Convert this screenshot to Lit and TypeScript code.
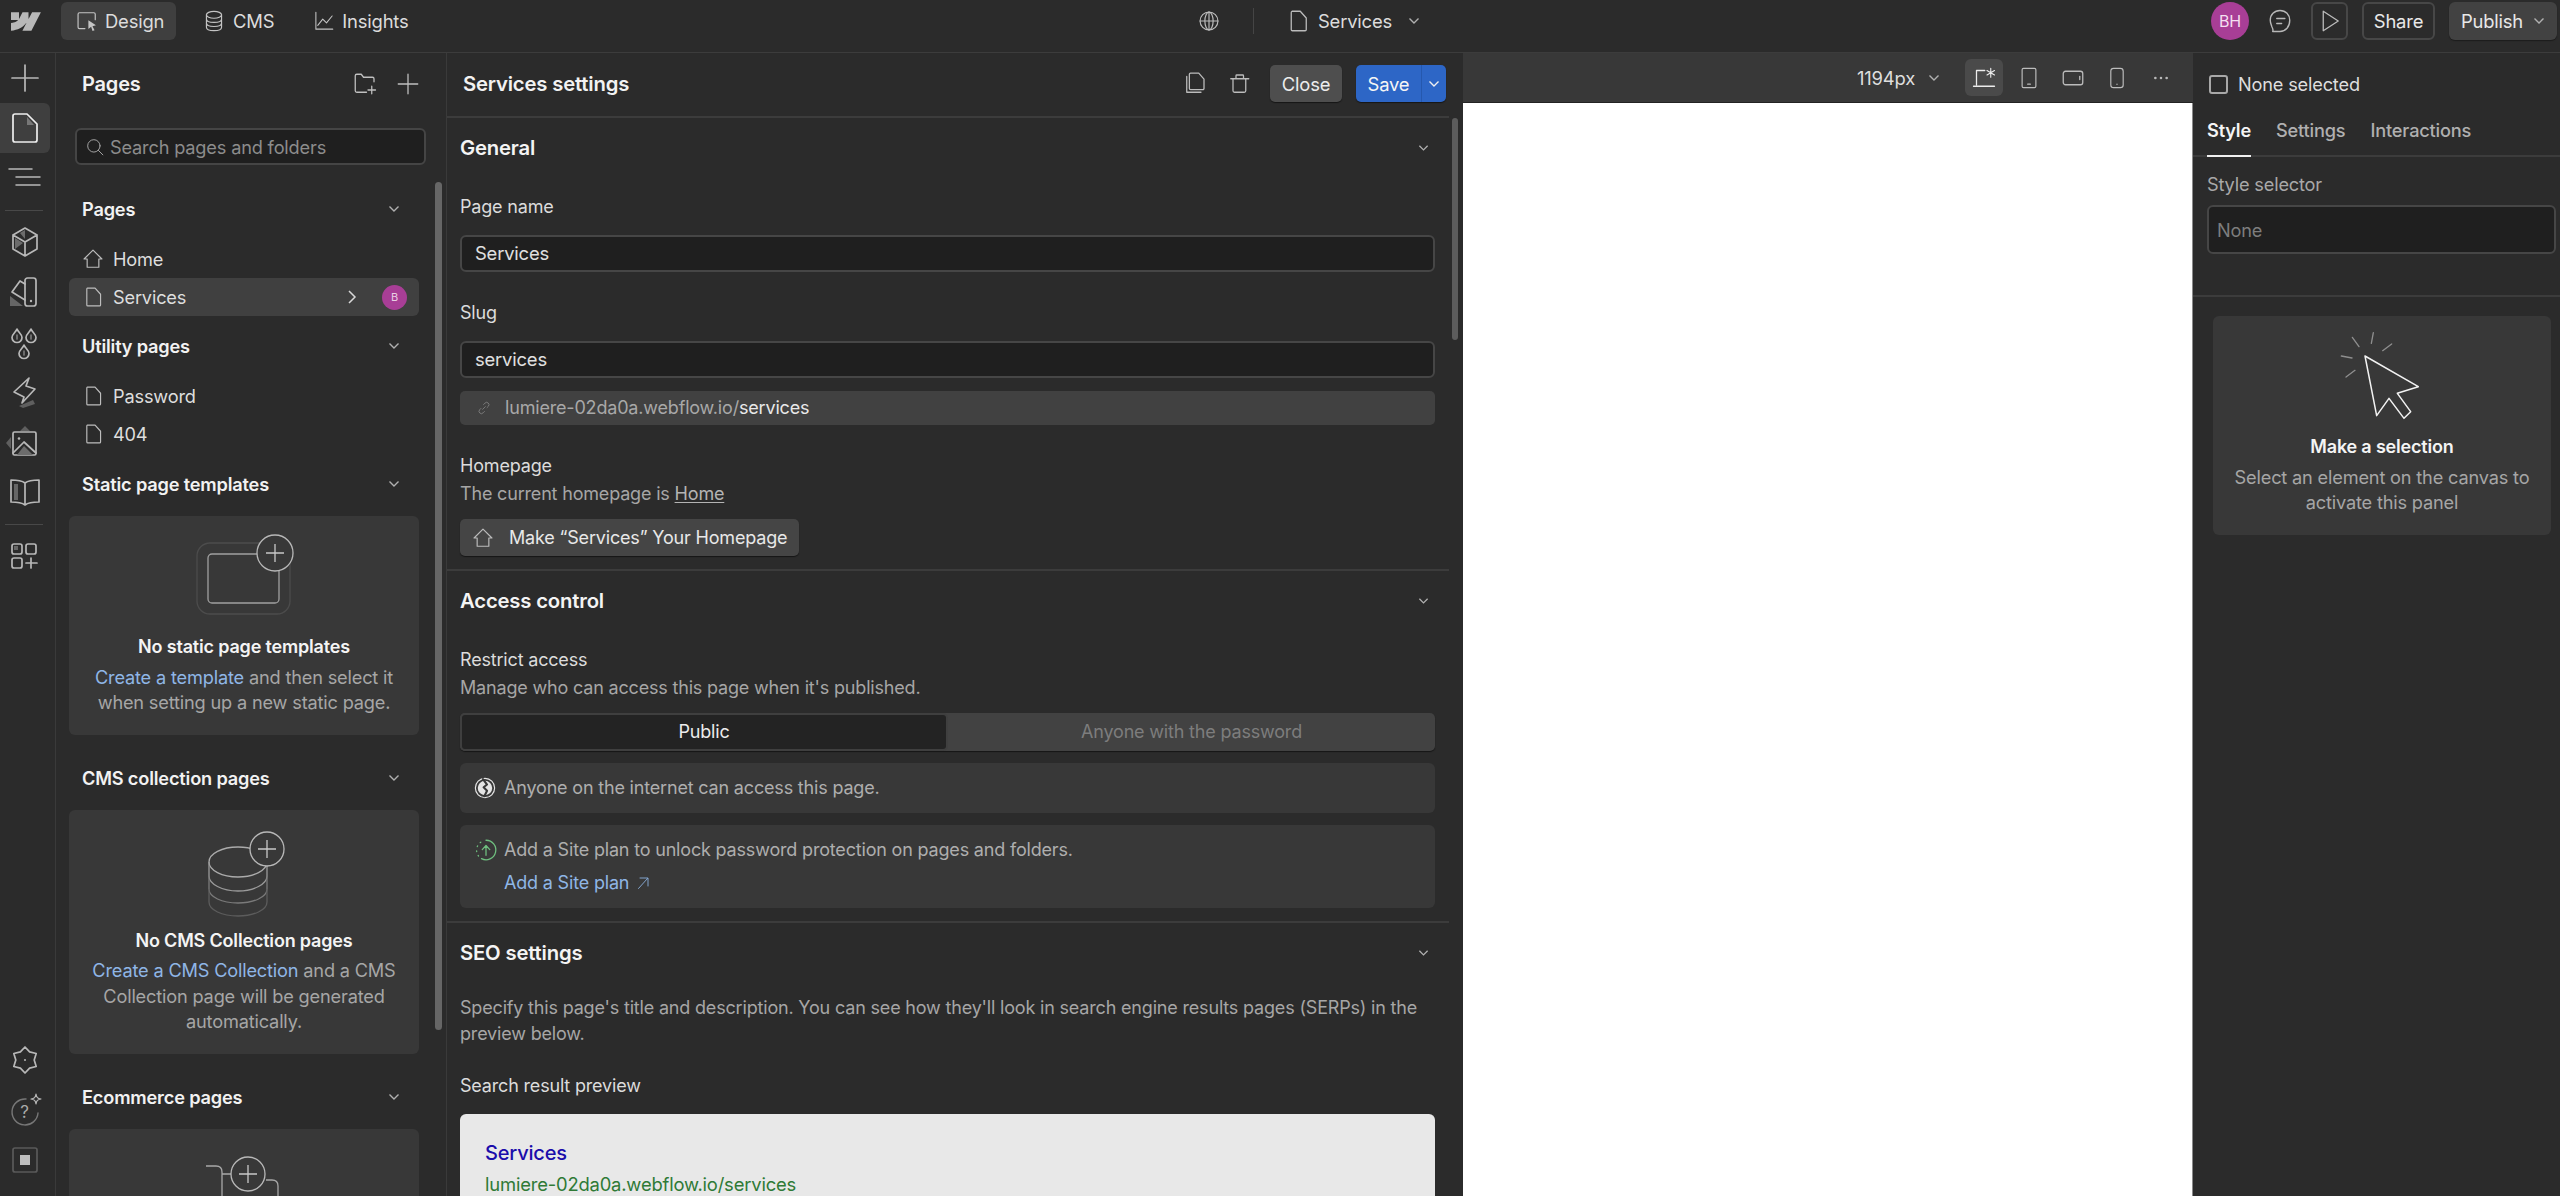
import { LitElement, html, css, svg } from 'lit';
import { customElement } from 'lit/decorators.js';

const chevron = html`<svg class="chev" width="12" height="8" viewBox="0 0 12 8"><path d="M1.500 1.500 6 6l4.500-4.500" fill="none" stroke="currentColor" stroke-width="1.400"/></svg>`;

// stroke icon in a 32 box, the rail and the toolbars all use this
const ico = (body: unknown, size = 32, cls = '') => html`<svg class="ico ${cls}" width=${size} height=${size} viewBox="0 0 32 32" fill="none" stroke="currentColor" stroke-width="1.700" stroke-linejoin="round" stroke-linecap="round">${body}</svg>`;

const pagePath = svg`<path d="M8 3h11l8 9v15.500a1.500 1.500 0 0 1-1.500 1.500h-17A1.500 1.500 0 0 1 7 27.500v-23A1.500 1.500 0 0 1 8 3z"/>`;
const homePath = svg`<path d="M16 3 3 16h4.500v12h17V16H29z"/>`;

const railTop = [
  svg`<path d="M16 3v26M3 16h26"/>`,
  svg`<path d="M6 2h12l10 10v16a2 2 0 0 1-2 2H6a2 2 0 0 1-2-2V4a2 2 0 0 1 2-2z"/><path d="M18 5l7 8h-7z" fill="#777" stroke="none"/>`,
  svg`<path d="M0 7h23M7 15h24M7 23h24" stroke-width="1.500"/>`,
];
const railMid = [
  svg`<path d="M16 2 28 9v14l-12 7-12-7V9zM4 9l12 7 12-7M16 16v14"/><path d="M11 7l5-3v9zM6 12l8 5-8 6z" fill="#6c6c6c" stroke="none"/>`,
  svg`<rect x="16" y="2" width="11" height="28" rx="2.500"/><path d="M16 8l-5-3-8 11 13 8"/><path d="M1 30V20l13 10z" fill="#666" stroke="none"/><circle cx="22" cy="25" r="1.200" fill="currentColor" stroke="none"/>`,
  svg`<path d="M8 3c1 3 5 5 5 8.500a5 5 0 0 1-10 0C3 8 7 6 8 3zM22 3c1 3 5 5 5 8.500a5 5 0 0 1-10 0C17 8 21 6 22 3zM15 19c1 3 5 5 5 8.500a5 5 0 0 1-10 0c0-3.500 4-5.500 5-8.500z"/><path d="M8 9v4M22 9v4M15 25v4" stroke="#777"/>`,
  svg`<path d="M20 2 5 16l10 5-2 6 13-14-9-3z"/><path d="M10 30l14-6 2 4-12 4z" fill="#5f5f5f" stroke="none"/>`,
  svg`<rect x="4" y="6" width="23" height="23" rx="1.500"/><circle cx="10" cy="12.500" r="1.300" fill="currentColor" stroke="none"/><path d="M4 27l11-11 12 11"/><path d="M8 29l7-9 9 9z" fill="#6c6c6c" stroke="none"/><path d="M16 0l5 5H11zM2 11l-5 6 5 6z" fill="#5f5f5f" stroke="none"/>`,
  svg`<path d="M16 7C12 4 7 4 2 4v22c5 0 10 0 14 3 4-3 9-3 14-3V4c-5 0-10 0-14 3v22"/><path d="M5 8h4v16H5z" fill="#666" stroke="none"/>`,
];
const railApps = svg`<rect x="3" y="4" width="10" height="10" rx="2"/><rect x="17" y="4" width="10" height="10" rx="2"/><rect x="3" y="18" width="10" height="10" rx="2"/><path d="M22 18v10M17 23h11"/><path d="M5 6h4v4H5z" fill="#666" stroke="none"/>`;
const railGear = svg`<path d="M16 3l4.600 4.900 6.600 1.600-2 6.500 2 6.500-6.600 1.600-4.600 4.900-4.600-4.900-6.600-1.600 2-6.500-2-6.500 6.600-1.600z"/><circle cx="16" cy="16" r="1" fill="currentColor" stroke="none"/>`;
const railHelp = svg`<path d="M17 5A13 13 0 1 0 29 19" stroke="#777" stroke-width="1.400"/><text x="15.500" y="23.500" font-family="Inter" font-size="17" fill="#aaa" stroke="none" text-anchor="middle">?</text><path d="M27 0c.6 3.500 1.500 4.400 5 5-3.500.6-4.400 1.500-5 5-.6-3.500-1.500-4.400-5-5 3.500-.6 4.400-1.500 5-5z" stroke-width="1.200"/>`;
const railView = svg`<rect x="4" y="4" width="24" height="24" rx="2" stroke="#5a5a5a"/><rect x="11" y="11" width="10" height="10" fill="#bdbdbd" stroke="none"/>`;

const plusCircle = (cx: number, cy: number, r: number) => svg`<circle cx=${cx} cy=${cy} r=${r} fill="#383838" stroke="#b8b8b8" stroke-width="1.300"/><path d=${`M${cx} ${cy - 9}v18M${cx - 9} ${cy}h18`} stroke="#c8c8c8" stroke-width="1.300"/>`;

@customElement('app-root')
export class AppRoot extends LitElement {
  static styles = css`
    :host {
      display: block;
      width: 2560px;
      height: 1196px;
      overflow: hidden;
      background: #2b2b2b;
      color: #e8e8e8;
      font-family: Inter, 'Liberation Sans', sans-serif;
      font-size: 18.400px;
      line-height: 26px;
      letter-spacing: -0.180px;
    }
    .ico { display: block; flex: none; overflow: visible; }
    .chev { display: block; flex: none; color: #b0b0b0; }
    b { font-weight: 600; }

    /* top bar */
    .top {
      height: 50px;
      padding-top: 2px;
      display: flex;
      align-items: flex-start;
      border-bottom: 1px solid #3c3c3c;
      box-sizing: content-box;
    }
    .top-left { width: 1198px; display: flex; align-items: center; flex: none; height: 38px; }
    .logo { margin: 0 20px 0 11px; width: 30px; height: 19px; }
    .tab { display: flex; align-items: center; height: 38px; gap: 9px; color: #dcdcdc; }
    .tab .ico { color: #c4c4c4; }
    .tab.design { width: 115px; box-sizing: border-box; padding-left: 15px; background: #3f3f3f; border-radius: 6px; }
    .tab.cms { margin-left: 27px; gap: 8px; }
    .tab.insights { margin-left: 40px; gap: 8px; }
    .top-center { display: flex; align-items: center; height: 38px; }
    .top-center .sep { width: 1px; height: 26px; background: #454545; margin: 0 32px 0 33px; }
    .top-center .pg { display: flex; align-items: center; gap: 8px; color: #dcdcdc; }
    .top-center .pg .chev { margin-left: 8px; }
    .top-center .ico { color: #bcbcbc; }
    .top-right { margin-left: auto; display: flex; align-items: center; padding-right: 3px; height: 38px; }
    .avatar { width: 38px; height: 38px; border-radius: 50%; background: #a83e96; display: flex; align-items: center; justify-content: center; font-size: 16px; color: #f4dff0; }
    .comment { margin: 0 18px; color: #b8b8b8; }
    .outline-btn { height: 38px; box-sizing: border-box; border: 2px solid #474747; border-radius: 6px; display: flex; align-items: center; justify-content: center; color: #e8e8e8; }
    .play { width: 37px; color: #bcbcbc; }
    .share { width: 73px; margin: 0 14px; }
    .publish { width: 108px; height: 38px; border-radius: 6px; background: #424242; display: flex; align-items: center; justify-content: center; gap: 10px; box-shadow: 0 1px 1px #1c1c1c; }

    .main { display: flex; height: 1143px; }

    /* icon rail */
    .rail { width: 55px; flex: none; border-right: 1px solid #3a3a3a; box-sizing: content-box; display: flex; flex-direction: column; color: #b8b8b8; padding-bottom: 11px; height: 1132px; }
    .slot { width: 50px; height: 50px; flex: none; display: flex; align-items: center; justify-content: center; }
    .slot.on { background: #3f3f3f; border-radius: 0 6px 6px 0; color: #eee; }
    .rail hr { width: 38px; height: 1px; margin: 7px 0 6px 5px; border: 0; background: #484848; flex: none; }
    .rail .bottom { margin-top: auto; }

    /* pages panel */
    .pages { position: relative; width: 391px; flex: none; border-right: 1px solid #3a3a3a; height: 1143px; overflow: hidden; box-sizing: border-box; font-size: 18.200px; }
    .pages-head { height: 62px; display: flex; align-items: center; padding: 0 26px; color: #f2f2f2; font-size: 20px; }
    .pages-head b { flex: 1; }
    .pages-head .ico { color: #c0c0c0; margin-left: 19px; }
    .search { margin: 13px 0 24px 19px; width: 351px; height: 37px; box-sizing: border-box; border: 2px solid #454545; border-radius: 6px; background: #1f1f1f; display: flex; align-items: center; padding-left: 9px; gap: 6px; color: #8c8c8c; }
    .search .ico { color: #a8a8a8; }
    .sec-head { height: 40px; display: flex; align-items: center; justify-content: space-between; padding: 0 46px 0 26px; color: #f2f2f2; }
    .rows { margin: 11px 0; }
    .rows.first { margin-bottom: 10px; }
    .row { height: 38px; width: 350px; margin-left: 13px; box-sizing: border-box; padding-left: 13px; display: flex; align-items: center; gap: 9px; border-radius: 6px; color: #dedede; }
    .row .ico { color: #bdbdbd; }
    .row.on { background: #404040; }
    .row.on .arrow { margin-left: auto; margin-right: 16px; color: #d8d8d8; }
    .row .who { width: 25px; height: 25px; margin-right: 12px; border-radius: 50%; background: #a83e96; color: #e8cfe3; font-size: 11px; display: flex; align-items: center; justify-content: center; }
    .card { margin: 12px 0 23px 13px; width: 350px; box-sizing: border-box; padding: 19px 18px; background: #383838; border-radius: 6px; text-align: center; color: #a6a6a6; line-height: 25.500px; }
    .card svg { display: block; margin: 0 auto 19px; overflow: visible; }
    .card .t { color: #f4f4f4; font-weight: 600; margin-bottom: 5px; font-size: 18px; }
    a { color: #8fb6e6; text-decoration: none; }
    .track { position: absolute; right: 4px; top: 129px; width: 7px; height: 848px; border-radius: 4px; background: #666; }

    /* settings panel */
    .settings { position: relative; width: 1016px; flex: none; height: 1143px; overflow: hidden; font-size: 18px; }
    .settings-head { height: 65px; width: 1002px; display: flex; align-items: center; padding: 0 3px 2px 16px; box-sizing: border-box; border-bottom: 2px solid #3c3c3c; color: #f2f2f2; font-size: 20.300px; }
    .settings-head b { flex: 1; }
    .settings-head .ico { color: #bcbcbc; margin-right: 20px; }
    .settings-head .ico + .ico { margin-right: 19px; }
    .btn { height: 37px; border-radius: 5px; display: flex; align-items: center; justify-content: center; color: #ececec; font-size: 18.400px; }
    .btn.close { width: 72px; background: #4e4e4e; margin-right: 14px; box-shadow: 0 1px 1px #161616; }
    .save { display: flex; height: 37px; width: 90px; border-radius: 5px; overflow: hidden; background: #2d66c6; color: #f5f5f5; box-shadow: 0 1px 1px #161616; font-size: 18.400px; }
    .save span { width: 65px; display: flex; align-items: center; justify-content: center; border-right: 1px solid #2558ae; }
    .save div { flex: 1; display: flex; align-items: center; justify-content: center; }
    .save .chev { color: #f0f0f0; }
    .sec { width: 1002px; box-sizing: border-box; padding: 0 14px 13px 13px; border-bottom: 2px solid #3c3c3c; }
    .sec:last-of-type { border-bottom: 0; }
    .sec-title { height: 60px; display: flex; align-items: center; justify-content: space-between; padding-right: 6px; font-size: 20.300px; font-weight: 600; color: #f4f4f4; }
    .sec-title .chev { width: 11px; }
    .label { color: #dcdcdc; height: 26px; }
    .mute { color: #a6a6a6; height: 26px; }
    .field { height: 37px; box-sizing: border-box; border: 2px solid #464646; border-radius: 6px; background: #1f1f1f; display: flex; align-items: center; padding: 0 0 2px 13px; color: #e0e0e0; font-size: 18.400px; }
    .url { height: 34px; margin-top: 13px; background: #414141; border-radius: 5px; display: flex; align-items: center; padding-left: 17px; gap: 14px; color: #a8a8a8; }
    .url .ico { color: #8c8c8c; }
    .url span span { color: #e8e8e8; }
    .mk { display: inline-flex; align-items: center; gap: 15px; height: 37px; padding: 0 12px; margin-top: 12px; background: #454545; border-radius: 5px; color: #e8e8e8; box-shadow: 0 1px 1px #161616; }
    .mk .ico { color: #bcbcbc; }
    .home-link { color: #b4b4b4; text-decoration: underline; text-underline-offset: 2px; }
    .seg { display: flex; height: 38px; margin-top: 12px; background: #424242; border-radius: 5px; box-shadow: 0 1px 1px #161616; }
    .seg div { flex: 1; display: flex; align-items: center; justify-content: center; color: #7d7d7d; }
    .seg div.on { flex: none; width: 488px; box-sizing: border-box; background: #232323; border: 2px solid #3f3f3f; border-radius: 5px; color: #ececec; }
    .note { margin-top: 12px; background: #383838; border-radius: 6px; padding: 12px 14px; display: grid; grid-template-columns: 24px 1fr; column-gap: 6px; color: #aeaeae; }
    .note .ico { align-self: center; color: #e4e4e4; }
    .note .ok { color: #6fbf7f; }
    .note a { display: flex; align-items: center; gap: 6px; grid-column: 2; margin-top: 7px; }
    .note a .ico { color: #8fb6e6; }
    .serp { margin-top: 15px; height: 200px; background: #e8e8e8; border-radius: 6px 6px 0 0; padding: 26px 25px; box-sizing: border-box; }
    .serp .h { color: #1a0dab; font-size: 20px; font-weight: 500; }
    .serp .u { color: #2f7a36; margin-top: 5px; font-size: 18.400px; }
    .settings .track { right: 5px; top: 65px; width: 6px; height: 222px; background: #5c5c5c; }

    /* canvas */
    .canvas { width: 730px; flex: none; height: 1143px; display: flex; flex-direction: column; }
    .bar { height: 50px; box-sizing: border-box; background: #383838; border-bottom: 1px solid #232323; display: flex; align-items: center; color: #bcbcbc; padding-left: 394px; flex: none; }
    .bar .w { color: #dedede; margin-right: 13px; }
    .bar .sel { margin-left: 25px; width: 38px; height: 37px; border-radius: 6px; background: #4a4a4a; display: flex; align-items: center; justify-content: center; color: #ececec; }
    .bar .d { width: 44px; display: flex; justify-content: center; }
    .bar .d.first { margin-left: 4px; }
    .white { flex: 1; background: #fff; border-right: 1px solid #8a8a8a; }

    /* right panel */
    .side { width: 367px; flex: none; box-sizing: border-box; height: 1143px; overflow: hidden; font-size: 18.200px; }
    .none { height: 62px; display: flex; align-items: center; gap: 10px; padding-left: 16px; color: #dedede; }
    .none i { display: block; width: 19px; height: 19px; box-sizing: border-box; border: 2px solid #a8a8a8; border-radius: 3px; }
    .tabs { height: 42px; display: flex; gap: 25px; padding-left: 14px; border-bottom: 2px solid #3c3c3c; color: #b0b0b0; font-weight: 500; box-sizing: border-box; padding-top: 2px; }
    .tabs .on { color: #f4f4f4; font-weight: 600; height: 40px; border-bottom: 2px solid #f0f0f0; box-sizing: border-box; }
    .sel-label { padding: 14px 0 8px 14px; color: #a8a8a8; }
    .sel-input { margin-left: 14px; width: 349px; height: 49px; box-sizing: border-box; border: 2px solid #464646; border-radius: 6px; background: #1f1f1f; display: flex; align-items: center; padding-left: 8px; color: #7d7d7d; }
    .side hr { margin: 41px 0 19px; border: 0; height: 2px; background: #3c3c3c; }
    .side .card { margin: 0 0 0 20px; width: 338px; padding: 14px 10px 19px; }
    .side .card svg { margin-bottom: 14px; }
  `;

  private railSlot(body: unknown, on = false) {
    return html`<div class="slot ${on ? 'on' : ''}">${ico(body)}</div>`;
  }

  private renderTop() {
    return html`<header class="top">
      <div class="top-left">
        <svg class="logo" viewBox="-0.400 3 30 18.500"><path d="M29.500 3 20 21.500h-9l4-7.700h-.2C11.500 18.100 6.600 20.900-.4 21.500v-7.600s4.500-.3 7.100-3.100H-.4V3h8v6.600h.2L11.100 3h6v6.500h.2L20.700 3z" fill="#b8b8b8"/></svg>
        <div class="tab design">${ico(svg`<path d="M13 27H5a2 2 0 0 1-2-2V6a2 2 0 0 1 2-2h21a2 2 0 0 1 2 2v8"/><path d="M18 15l11 7-5 1.500 3 6-3 1-2-6-4 3z" fill="currentColor" stroke="none"/>`, 22)}<span style="margin-left:-2px">Design</span></div>
        <div class="tab cms">${ico(svg`<ellipse cx="16" cy="7" rx="11" ry="5"/><path d="M5 7v18c0 3 5 5 11 5s11-2 11-5V7M5 13c0 3 5 5 11 5s11-2 11-5M5 19c0 3 5 5 11 5s11-2 11-5"/>`, 22)}<span>CMS</span></div>
        <div class="tab insights">${ico(svg`<path d="M3 2v27h27M6 23l8-10 6 6 9-11"/>`, 20)}<span>Insights</span></div>
      </div>
      <div class="top-center">
        ${ico(svg`<circle cx="16" cy="16" r="13"/><ellipse cx="16" cy="16" rx="6" ry="13"/><path d="M3 16h26M16 3v26"/>`, 22)}
        <div class="sep"></div>
        <div class="pg">${ico(pagePath, 24)}<span>Services</span>${chevron}</div>
      </div>
      <div class="top-right">
        <div class="avatar">BH</div>
        <div class="comment">${ico(svg`<path d="M16 3c7 0 12 5 12 12 0 8-5 14-12 14H7c1-2 0-4-1-6-1-3-2-5-2-8C4 8 9 3 16 3z"/><path d="M12 13h10M12 19h6"/>`, 26)}</div>
        <div class="outline-btn play">${ico(svg`<path d="M7 3l20 13L7 29z"/>`, 24)}</div>
        <div class="outline-btn share">Share</div>
        <div class="publish"><span>Publish</span>${chevron}</div>
      </div>
    </header>`;
  }

  private renderRail() {
    return html`<nav class="rail">
      ${this.railSlot(railTop[0])}
      ${this.railSlot(railTop[1], true)}
      ${this.railSlot(railTop[2])}
      <hr />
      ${railMid.map((b) => this.railSlot(b))}
      <hr />
      ${this.railSlot(railApps)}
      <div class="bottom">
        ${this.railSlot(railGear)}
        ${this.railSlot(railHelp)}
        ${this.railSlot(railView)}
      </div>
    </nav>`;
  }

  private renderPages() {
    return html`<section class="pages">
      <div class="pages-head">
        <b>Pages</b>
        ${ico(svg`<path d="M28 13V9a2 2 0 0 0-2-2H14l-3-4H5a2 2 0 0 0-2 2v20a2 2 0 0 0 2 2h13M25 19v10M20 24h10"/>`, 24)}
        ${ico(svg`<path d="M16 3v26M3 16h26"/>`, 24)}
      </div>
      <div class="search">${ico(svg`<circle cx="14" cy="14" r="11"/><path d="M22 22l8 8"/>`, 18)}<span>Search pages and folders</span></div>
      <div class="sec-head"><b>Pages</b>${chevron}</div>
      <div class="rows first">
        <div class="row">${ico(homePath, 22)}<span>Home</span></div>
        <div class="row on">${ico(pagePath, 22)}<span>Services</span>
          <svg class="arrow" width="10" height="16" viewBox="0 0 10 16"><path d="M2 2l6 6-6 6" fill="none" stroke="currentColor" stroke-width="1.500"/></svg>
          <div class="who">B</div></div>
      </div>
      <div class="sec-head"><b>Utility pages</b>${chevron}</div>
      <div class="rows">
        <div class="row">${ico(pagePath, 22)}<span>Password</span></div>
        <div class="row">${ico(pagePath, 22)}<span>404</span></div>
      </div>
      <div class="sec-head"><b>Static page templates</b>${chevron}</div>
      <div class="card">
        <svg width="120" height="80" viewBox="0 0 120 80" fill="none">
          <rect x="13" y="8" width="93" height="71" rx="13" stroke="#4c4c4c" stroke-width="1.300"/>
          <rect x="24" y="19" width="71" height="49" rx="4" stroke="#a0a0a0" stroke-width="1.300"/>
          ${plusCircle(91, 18, 18)}
        </svg>
        <div class="t">No static page templates</div>
        <div><a>Create a template</a> and then select it when setting up a new static page.</div>
      </div>
      <div class="sec-head"><b>CMS collection pages</b>${chevron}</div>
      <div class="card">
        <svg width="120" height="80" viewBox="0 0 120 80" fill="none" stroke-width="1.300">
          <ellipse cx="54" cy="33" rx="29" ry="15" stroke="#ababab"/>
          <path d="M25 33v14c0 8 13 15 29 15s29-7 29-15V33" stroke="#9a9a9a"/>
          <path d="M25 47v13c0 8 13 14 29 14s29-6 29-14V47" stroke="#7a7a7a"/>
          <path d="M25 60v13c0 8 13 14 29 14s29-6 29-14V60" stroke="#5c5c5c"/>
          ${plusCircle(83, 20, 17)}
        </svg>
        <div class="t">No CMS Collection pages</div>
        <div><a>Create a CMS Collection</a> and a CMS Collection page will be generated automatically.</div>
      </div>
      <div class="sec-head"><b>Ecommerce pages</b>${chevron}</div>
      <div class="card">
        <svg width="120" height="80" viewBox="0 0 120 80" fill="none" stroke-width="1.300">
          <path d="M22 18h10q6 0 6 6v60M48 26H38M82 32h6q6 0 6 6v50" stroke="#a8a8a8"/>
          ${plusCircle(64, 26, 17)}
        </svg>
      </div>
      <div class="track"></div>
    </section>`;
  }

  private renderSettings() {
    return html`<section class="settings">
      <div class="settings-head">
        <b>Services settings</b>
        ${ico(svg`<path d="M10 1.500h11l7 8V22a1.500 1.500 0 0 1-1.500 1.500H10A1.500 1.500 0 0 1 8.500 22V3A1.500 1.500 0 0 1 10 1.500zM5 6v21h19"/>`, 24)}
        ${ico(svg`<path d="M5 9h24M8 9v16a2 2 0 0 0 2 2h13a2 2 0 0 0 2-2V9M12 9V5a1 1 0 0 1 1-1h8a1 1 0 0 1 1 1v4"/>`, 24)}
        <div class="btn close">Close</div>
        <div class="save"><span>Save</span><div>${chevron}</div></div>
      </div>
      <div class="sec">
        <div class="sec-title"><span>General</span>${chevron}</div>
        <div class="label" style="margin-top:16px">Page name</div>
        <div class="field" style="margin-top:15px">Services</div>
        <div class="label" style="margin-top:28px">Slug</div>
        <div class="field" style="margin-top:15px">services</div>
        <div class="url">${ico(svg`<path d="M13 19l6-6M15 8l3-3a5 5 0 0 1 8 7l-3 3M17 24l-3 3a5 5 0 0 1-8-7l3-3"/>`, 14)}<span>lumiere-02da0a.webflow.io/<span>services</span></span></div>
        <div class="label" style="margin-top:28px">Homepage</div>
        <div class="mute" style="margin-top:2px">The current homepage is <span class="home-link">Home</span></div>
        <div class="mk">${ico(homePath, 22)}<span>Make “Services” Your Homepage</span></div>
      </div>
      <div class="sec">
        <div class="sec-title"><span>Access control</span>${chevron}</div>
        <div class="label" style="margin-top:16px">Restrict access</div>
        <div class="mute" style="margin-top:2px">Manage who can access this page when it's published.</div>
        <div class="seg"><div class="on">Public</div><div>Anyone with the password</div></div>
        <div class="note">
          ${ico(svg`<circle cx="16" cy="16" r="14"/><circle cx="16" cy="16" r="10.500" fill="currentColor" stroke="none"/><path d="M13 3l6 8-5 4 5 5-4 8" stroke="#383838" stroke-width="3"/>`, 22)}
          <span>Anyone on the internet can access this page.</span>
        </div>
        <div class="note">
          ${ico(svg`<path d="M16 3a13 13 0 1 1-6 24.500"/><path d="M6 24A13 13 0 0 1 11 4.500" stroke-dasharray="1 5.500"/><path d="M16 23V11M11 15.500l5-5.500 5 5.500"/>`, 24, 'ok')}
          <span>Add a Site plan to unlock password protection on pages and folders.</span>
          <a>Add a Site plan ${ico(svg`<path d="M7 27 25 7M10 6h16v16"/>`, 16)}</a>
        </div>
      </div>
      <div class="sec">
        <div class="sec-title"><span>SEO settings</span>${chevron}</div>
        <div class="mute" style="margin-top:12px;height:auto">Specify this page's title and description. You can see how they'll look in search engine results pages (SERPs) in the preview below.</div>
        <div class="label" style="margin-top:26px">Search result preview</div>
        <div class="serp"><div class="h">Services</div><div class="u">lumiere-02da0a.webflow.io/services</div></div>
      </div>
      <div class="track"></div>
    </section>`;
  }

  private renderCanvas() {
    return html`<section class="canvas">
      <div class="bar">
        <span class="w">1194px</span>${chevron}
        <div class="sel">${ico(svg`<path d="M6 6v19M2 27h28M6 6h11"/><path d="M25 3v12M20 6l10 6M30 6l-10 6" stroke-width="1.500"/>`, 24)}</div>
        <div class="d first">${ico(svg`<rect x="6" y="2" width="20" height="28" rx="2"/><path d="M14 25h4"/>`, 22)}</div>
        <div class="d">${ico(svg`<rect x="3" y="7" width="26" height="18" rx="3"/><path d="M25 14v4"/>`, 24)}</div>
        <div class="d">${ico(svg`<rect x="7" y="2" width="18" height="28" rx="4"/><path d="M16 25v.5"/>`, 22)}</div>
        <div class="d">${ico(svg`<circle cx="7" cy="16" r="1.200" fill="currentColor"/><circle cx="16" cy="16" r="1.200" fill="currentColor"/><circle cx="25" cy="16" r="1.200" fill="currentColor"/>`, 20)}</div>
      </div>
      <div class="white"></div>
    </section>`;
  }

  private renderSide() {
    return html`<aside class="side">
      <div class="none"><i></i><span>None selected</span></div>
      <div class="tabs"><span class="on">Style</span><span>Settings</span><span>Interactions</span></div>
      <div class="sel-label">Style selector</div>
      <div class="sel-input">None</div>
      <hr />
      <div class="card">
        <svg width="80" height="90" viewBox="486 150 240 270" fill="none" stroke-linecap="round" stroke-linejoin="round">
          <path d="M517 172l20 28M580 158l-6 32M635 192l-27 20M484 228l32 6M498 291l27-20" stroke="#8e8e8e" stroke-width="4"/>
          <path d="M555 228 715 320 652 340 692 395 672 415 627 355 590 407z" stroke="#f2f2f2" stroke-width="4.500"/>
        </svg>
        <div class="t">Make a selection</div>
        <div>Select an element on the canvas to activate this panel</div>
      </div>
    </aside>`;
  }

  render() {
    return html`
      ${this.renderTop()}
      <div class="main">
        ${this.renderRail()}
        ${this.renderPages()}
        ${this.renderSettings()}
        ${this.renderCanvas()}
        ${this.renderSide()}
      </div>
    `;
  }
}
